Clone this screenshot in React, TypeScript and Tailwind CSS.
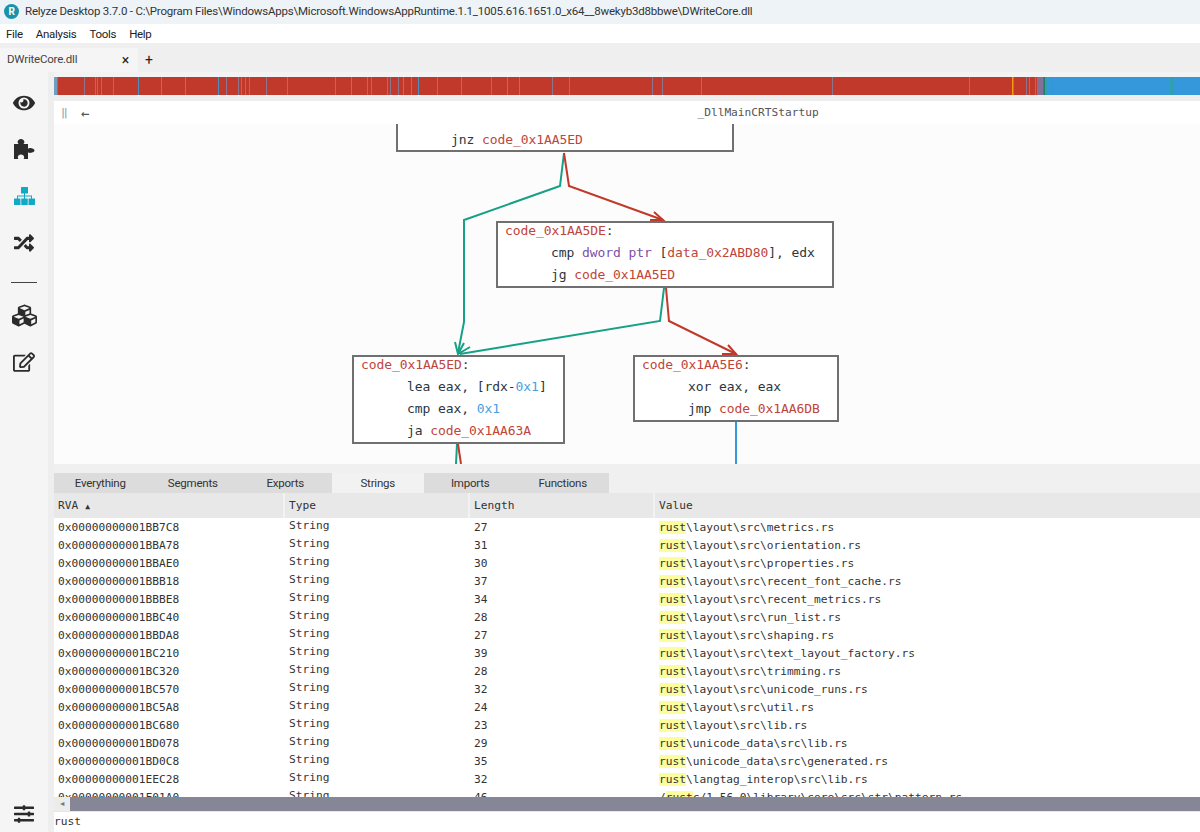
import { FaEye, FaRandom, FaCubes, FaRegEdit, FaSlidersH } from 'react-icons/fa';

const mono = { fontFamily: '"DejaVu Sans Mono", monospace' };

const redMarks = [84, 95, 97, 101, 113, 138, 161, 185, 218, 226, 238, 241, 245, 249, 266, 287, 335, 351, 367, 371, 387, 390, 398, 403, 411, 418, 437, 461, 491, 507, 519, 552, 569, 652, 662, 701, 832, 969, 1026, 1029, 1035];
const strongMarks = [138, 161, 185, 218, 351, 403, 411, 418, 461, 507, 519];
const tealMarks = [1046, 1051, 1170, 1172];

const rows = [
  ['0x00000000001BB7C8', '27', 'rust\\layout\\src\\metrics.rs'],
  ['0x00000000001BBA78', '31', 'rust\\layout\\src\\orientation.rs'],
  ['0x00000000001BBAE0', '30', 'rust\\layout\\src\\properties.rs'],
  ['0x00000000001BBB18', '37', 'rust\\layout\\src\\recent_font_cache.rs'],
  ['0x00000000001BBBE8', '34', 'rust\\layout\\src\\recent_metrics.rs'],
  ['0x00000000001BBC40', '28', 'rust\\layout\\src\\run_list.rs'],
  ['0x00000000001BBDA8', '27', 'rust\\layout\\src\\shaping.rs'],
  ['0x00000000001BC210', '39', 'rust\\layout\\src\\text_layout_factory.rs'],
  ['0x00000000001BC320', '28', 'rust\\layout\\src\\trimming.rs'],
  ['0x00000000001BC570', '32', 'rust\\layout\\src\\unicode_runs.rs'],
  ['0x00000000001BC5A8', '24', 'rust\\layout\\src\\util.rs'],
  ['0x00000000001BC680', '23', 'rust\\layout\\src\\lib.rs'],
  ['0x00000000001BD078', '29', 'rust\\unicode_data\\src\\lib.rs'],
  ['0x00000000001BD0C8', '35', 'rust\\unicode_data\\src\\generated.rs'],
  ['0x00000000001EEC28', '32', 'rust\\langtag_interop\\src\\lib.rs'],
  ['0x00000000001F01A0', '46', '/rustc/1.56.0\\library\\core\\src\\str\\pattern.rs'],
];

const tabs = ['Everything', 'Segments', 'Exports', 'Strings', 'Imports', 'Functions'];

const Lbl = ({ children }: { children: string }) => <span className="text-[#c0453a]">{children}</span>;
const Num = ({ children }: { children: string }) => <span className="text-[#4a9fe0]">{children}</span>;
const Kw = ({ children }: { children: string }) => <span className="text-[#7d4fa8]">{children}</span>;
const Ins = ({ children }: { children: React.ReactNode }) => <div className="pl-[46px]">{children}</div>;

const Node = ({ className, children }: { className: string; children: React.ReactNode }) => (
  <div className={`absolute box-border border-2 border-[#707070] bg-white pl-[7px] text-[13px] leading-[22px] tracking-[-0.07px] text-[#2c3640] whitespace-pre ${className}`} style={mono}>
    <div className="-mt-[3px]">{children}</div>
  </div>
);

const Value = ({ text }: { text: string }) => {
  const i = text.indexOf('rust');
  return (
    <>
      {text.slice(0, i)}
      <span className="bg-[#fdfd9e]">rust</span>
      {text.slice(i + 4)}
    </>
  );
};

const PuzzleIcon = () => (
  <svg width="21" height="20" viewBox="0 0 21 20" fill="currentColor">
    <path d="M0 5h4.600c-.7-.6-1-1.200-1-1.900C3.600 1.400 5.100 0 7 0s3.400 1.400 3.400 3.100c0 .7-.3 1.300-1 1.900H14v4.800c.6-.5 1.200-.7 1.900-.7C17.500 9.100 20.500 10 20.500 11.500S17.500 13.900 15.900 13.900c-.7 0-1.300-.2-1.900-.7V20H9.500c.5-.5.7-1.100.7-1.700 0-1.500-1.400-2.700-3.200-2.700s-3.200 1.200-3.200 2.700c0 .6.2 1.200.7 1.700H0z" />
  </svg>
);

const SitemapIcon = () => (
  <svg width="21" height="18" viewBox="0 0 21 18" fill="currentColor">
    <rect x="7" y="0" width="7" height="6.500" rx="0.500" />
    <rect x="0" y="11.500" width="6.500" height="6.500" rx="0.500" />
    <rect x="7.250" y="11.500" width="6.500" height="6.500" rx="0.500" />
    <rect x="14.500" y="11.500" width="6.500" height="6.500" rx="0.500" />
    <path d="M10 6h1v2.500h7V12h-1V9.500h-6V12h-1V9.500H4V12H3V8.500h7z" />
  </svg>
);

export default function App() {
  return (
    <div className="flex h-[832px] w-[1200px] flex-col overflow-hidden bg-[#f0f0f0] text-[11.5px] tracking-[-0.21px] text-[#222]" style={{ fontFamily: 'Roboto, sans-serif' }}>
      {/* title bar */}
      <div className="flex h-[24px] items-center gap-[6px] bg-[#eef3f8] pl-[4px] pb-[1px]">
        <div className="flex h-[15px] w-[15px] items-center justify-center rounded-full bg-[#1a93a8] text-[10px] font-bold leading-none text-white">R</div>
        <span className="whitespace-pre text-[#333]">Relyze Desktop 3.7.0 - C:\Program Files\WindowsApps\Microsoft.WindowsAppRuntime.1.1_1005.616.1651.0_x64__8wekyb3d8bbwe\DWriteCore.dll</span>
      </div>

      {/* menu */}
      <div className="flex h-[19px] items-center gap-[13px] bg-white pl-[6px] pt-[2px] tracking-[-0.3px] text-[#222]">
        <span>File</span>
        <span>Analysis</span>
        <span>Tools</span>
        <span>Help</span>
      </div>

      {/* file tabs */}
      <div className="flex h-[29px] items-end bg-[#efefef]">
        <div className="flex h-[24px] w-[138px] items-center justify-between bg-[#f5f5f5] pl-[7px] pr-[9px]">
          <span className="text-[#444]">DWriteCore.dll</span>
          <span className="text-[14px] leading-none text-[#222]">×</span>
        </div>
        <span className="flex h-[24px] items-center pl-[7px] text-[14px] leading-none text-[#222]">+</span>
      </div>

      <div className="flex min-h-0 flex-1">
        {/* sidebar */}
        <div className="flex w-[48px] shrink-0 flex-col items-center bg-[#f5f5f5] pt-[20px] pb-[8px] text-[#2b2b2b]">
          <div className="flex h-[22px] items-center"><FaEye size={22} /></div>
          <div className="mt-[25px] flex h-[20px] items-center"><PuzzleIcon /></div>
          <div className="mt-[28px] flex h-[18px] items-center text-[#12a9c6]"><SitemapIcon /></div>
          <div className="mt-[28px] flex h-[20px] items-center"><FaRandom size={20} /></div>
          <div className="mt-[29px] h-px w-[26px] bg-[#444]" />
          <div className="mt-[21px] flex h-[22px] items-center"><FaCubes size={25} /></div>
          <div className="mt-[25px] flex h-[22px] items-center"><FaRegEdit size={22} /></div>
          <div className="mt-auto flex h-[20px] items-center"><FaSlidersH size={20} /></div>
        </div>

        <div className="w-[6px] shrink-0 bg-[#eeeeee]" />

        <div className="flex min-w-0 flex-1 flex-col">
          {/* overview bar */}
          <div className="h-[5px] shrink-0 bg-[#f3f3f3]" />
          <svg className="h-[18px] w-full shrink-0" viewBox="54 0 1146 18" preserveAspectRatio="none">
            <rect x="54" y="0" width="990" height="18" fill="#c0392b" />
            <rect x="1044" y="0" width="156" height="18" fill="#3498db" />
            <rect x="54" y="0" width="3.500" height="18" fill="#6e9fc0" />
            {redMarks.map((x) => (
              <rect key={x} x={x} y="0" width="1" height="18" fill={strongMarks.includes(x) ? '#4f8fc4' : '#8d7590'} />
            ))}
            <rect x="1012" y="0" width="1.500" height="18" fill="#f39c12" />
            <rect x="1037" y="0" width="7" height="18" fill="#85709a" />
            <rect x="1043.500" y="0" width="1.500" height="18" fill="#16806a" />
            {tealMarks.map((x) => (
              <rect key={x} x={x} y="0" width="1" height="18" fill="#2f9fb0" />
            ))}
          </svg>
          <div className="h-[6px] shrink-0 bg-[#eeeeee]" />

          {/* graph header */}
          <div className="flex h-[23px] shrink-0 items-center bg-white pt-[1px] text-[11.2px] tracking-normal text-[#555]" style={mono}>
            <span className="ml-[7px] w-[20px] text-[#8a96a3]">‖</span>
            <span className="text-[14px] leading-none text-[#555]">←</span>
            <span className="ml-[608px] whitespace-pre">_DllMainCRTStartup</span>
          </div>

          {/* graph canvas */}
          <div className="relative h-[340px] shrink-0 overflow-hidden bg-[#fcfcfc]">
            <svg className="absolute inset-0 h-[340px] w-[1146px]" viewBox="54 124 1146 340" fill="none" strokeWidth="2">
              <path d="M564 153 L560 186 L464 220 L464 322 L458 353" stroke="#16a085" />
              <path d="M455 342 L458 354 L470 347 M458 354 L464 343" stroke="#16a085" />
              <path d="M664 288 L660 321 L460 354" stroke="#16a085" />
              <path d="M564 153 L569 186 L663 220" stroke="#c0392b" />
              <path d="M654 212 L663 220 L650 220" stroke="#c0392b" />
              <path d="M666 288 L669 321 L736 354" stroke="#c0392b" />
              <path d="M728 345 L736 354 L722 354" stroke="#c0392b" />
              <path d="M457 444 L456 464" stroke="#16a085" />
              <path d="M458 444 L461 464" stroke="#c0392b" />
              <path d="M736 422 L736 464" stroke="#3498db" />
            </svg>

            <Node className="left-[342px] top-[-16px] h-[44px] w-[338px]">
              <Ins>test eax, eax</Ins>
              <Ins>jnz <Lbl>code_0x1AA5ED</Lbl></Ins>
            </Node>

            <Node className="left-[442px] top-[97px] h-[67px] w-[338px]">
              <div><Lbl>code_0x1AA5DE</Lbl>:</div>
              <Ins>cmp <Kw>dword ptr</Kw> [<Lbl>data_0x2ABD80</Lbl>], edx</Ins>
              <Ins>jg <Lbl>code_0x1AA5ED</Lbl></Ins>
            </Node>

            <Node className="left-[298px] top-[231px] h-[89px] w-[213px]">
              <div><Lbl>code_0x1AA5ED</Lbl>:</div>
              <Ins>lea eax, [rdx-<Num>0x1</Num>]</Ins>
              <Ins>cmp eax, <Num>0x1</Num></Ins>
              <Ins>ja <Lbl>code_0x1AA63A</Lbl></Ins>
            </Node>

            <Node className="left-[579px] top-[231px] h-[67px] w-[206px]">
              <div><Lbl>code_0x1AA5E6</Lbl>:</div>
              <Ins>xor eax, eax</Ins>
              <Ins>jmp <Lbl>code_0x1AA6DB</Lbl></Ins>
            </Node>
          </div>

          {/* table tabs */}
          <div className="flex h-[29px] shrink-0 items-end bg-[#f0f0f0]">
            {tabs.map((t) => (
              <div key={t} className={`flex h-[20px] w-[92.5px] items-center justify-center pt-[1px] text-[#333] ${t === 'Strings' ? 'bg-[#f2f2f2]' : 'bg-[#dcdcdc]'}`}>
                {t}
              </div>
            ))}
          </div>

          {/* table */}
          <div className="grid h-[25px] shrink-0 grid-cols-[231px_185px_185px_1fr] items-center bg-[#e8e8e8] text-[11.2px] tracking-normal text-[#333]" style={mono}>
            <div className="flex h-full items-center border-r-2 border-[#f2f2f2] pl-[4px] pt-[2px]">RVA<span className="ml-[7px] text-[8px]">▲</span></div>
            <div className="flex h-full items-center border-r-2 border-[#f2f2f2] pl-[4px] pt-[2px]">Type</div>
            <div className="flex h-full items-center border-r-2 border-[#f2f2f2] pl-[4px] pt-[2px]">Length</div>
            <div className="flex h-full items-center pl-[4px] pt-[2px]">Value</div>
          </div>
          <div className="min-h-0 flex-1 overflow-hidden bg-white text-[11.2px] tracking-normal text-[#333]" style={mono}>
            {rows.map((r) => (
              <div key={r[0]} className="grid h-[18px] grid-cols-[231px_185px_185px_1fr] items-center pt-[2px]">
                <div className="pl-[4px]">{r[0]}</div>
                <div className="-translate-y-[2px] pl-[4px]">String</div>
                <div className="pl-[4px]">{r[1]}</div>
                <div className="pl-[4px] whitespace-pre"><Value text={r[2]} /></div>
              </div>
            ))}
          </div>

          {/* scrollbar */}
          <div className="flex h-[14px] shrink-0 bg-[#858796]">
            <div className="flex w-[16px] items-center justify-center bg-[#ececec] text-[7px] text-[#777]">◄</div>
          </div>
          <div className="h-[1px] shrink-0 bg-[#e6e6e6]" />

          {/* filter */}
          <div className="flex h-[20px] shrink-0 items-center bg-white text-[11.2px] tracking-normal text-[#333]" style={mono}>rust</div>
        </div>
      </div>
    </div>
  );
}
